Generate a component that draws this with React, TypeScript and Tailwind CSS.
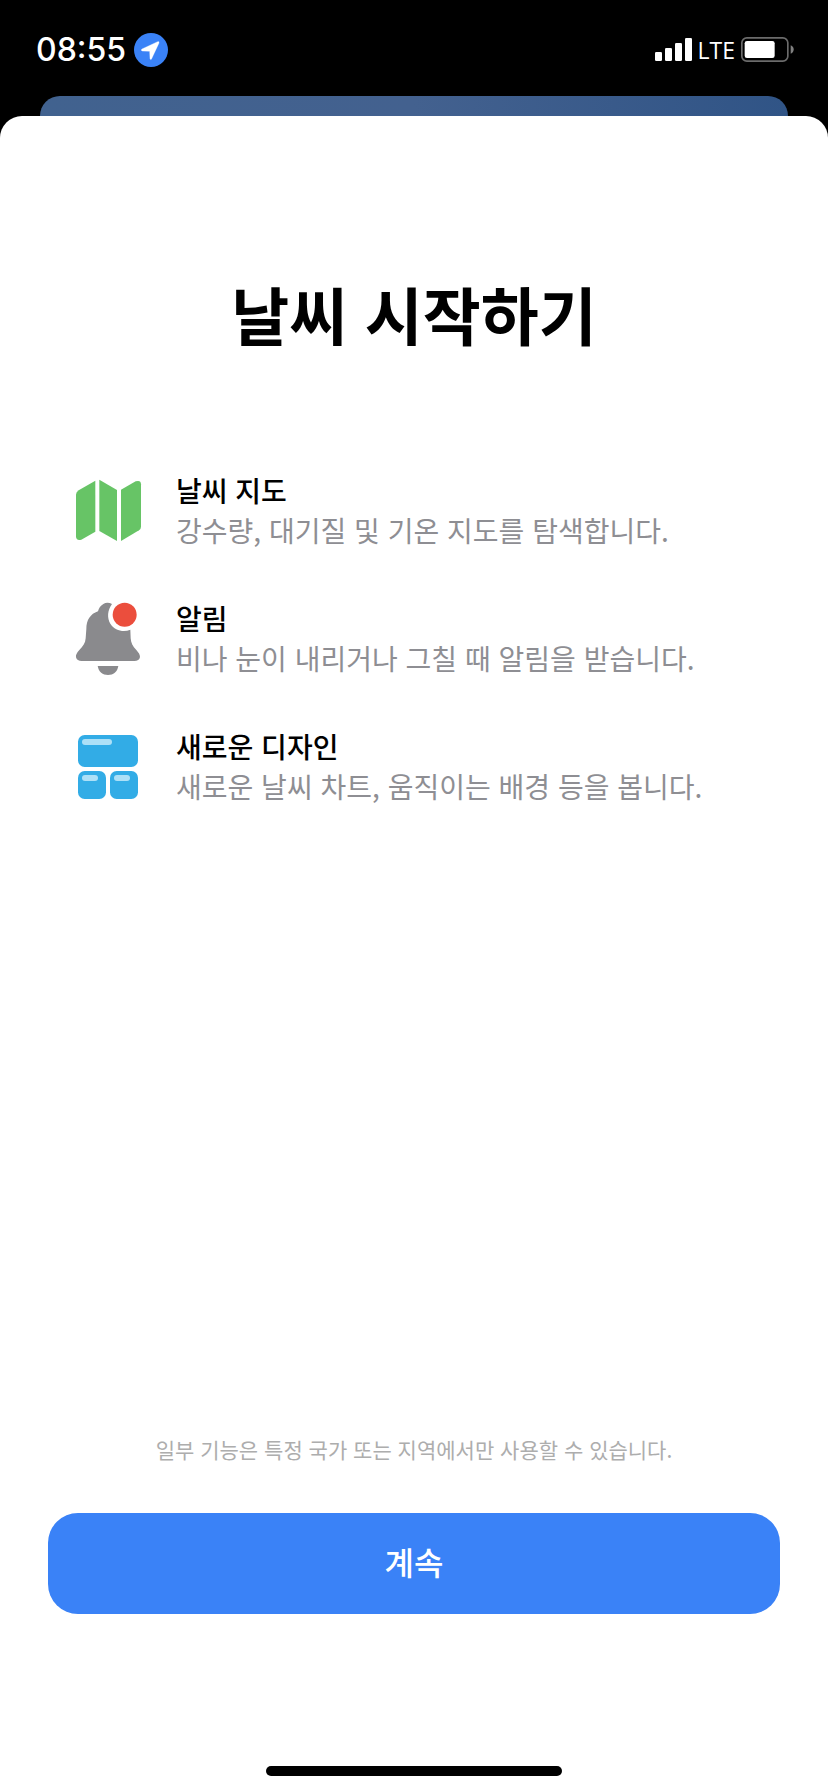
import type { ReactNode } from "react";

function LocationBadge() {
  return (
    <svg className="h-[34px] w-[34px]" viewBox="0 0 102 102" role="img" aria-label="위치 서비스">
      <circle cx="51" cy="51" r="51" fill="#3a82f7" />
      <path
        d="M71 26 L24 48 Q19 51 24 54 L47 55 L48 77 Q50 82 53 77L75 30 Q76 24 71 26 Z"
        fill="#fff"
        stroke="#fff"
        strokeWidth="1"
        strokeLinejoin="round"
      />
    </svg>
  );
}

function SignalBars() {
  return (
    <svg className="h-[23px] w-[37px]" viewBox="0 0 111 69" fill="#fff" aria-hidden="true">
      <rect x="0" y="42" width="21" height="27" rx="4" />
      <rect x="30" y="30" width="21" height="39" rx="4" />
      <rect x="60" y="15" width="21" height="54" rx="4" />
      <rect x="90" y="0" width="21" height="69" rx="4" />
    </svg>
  );
}

function Battery() {
  return (
    <svg className="h-[25px] w-[53px]" viewBox="0 0 159 75" aria-hidden="true">
      <rect x="2.5" y="2.5" width="138" height="70" rx="15" fill="none" stroke="#6b6b6b" strokeWidth="5" />
      <rect x="11" y="12" width="90" height="51" rx="7" fill="#fff" />
      <path d="M149 25 Q158 29 158 37.500 Q158 46 149 50 Z" fill="#808080" />
    </svg>
  );
}

function MapIcon() {
  return (
    <svg className="h-20 w-[72px]" viewBox="36 33 216 240" fill="#67c466" aria-hidden="true">
      <path d="M106 62 V215 L64 239 Q48 243 48 229 V104 Q48 96 56 91 Z" />
      <path d="M118 59 L171 90 V243 L118 213 Z" />
      <path d="M183 89 L227 64 Q243 59 243 73 V200 Q243 207 237 211 L183 243 Z" />
    </svg>
  );
}

function BellIcon() {
  return (
    <svg className="h-20 w-[72px]" viewBox="36 42 216 240" aria-hidden="true">
      <path
        d="M156 57 C148 53 138 52 130 57 C121 62 117 69 114 79 C91 87 79 105 79 132 L77 160 C76 175 69 184 58 195 C50 204 47 210 48 217 C50 225 56 228 65 228 H223 C232 228 239 224 240 216 C240 209 236 203 229 195 C218 184 213 174 212 160 L211 134 C190 143 164 136 151 116 C141 99 142 76 156 57 Z"
        fill="#8a8a8d"
      />
      <path d="M113 243 H175 C172 261 160 270 144 270 C128 270 116 261 113 243 Z" fill="#8a8a8d" />
      <circle cx="194" cy="89" r="36" fill="#eb4e3d" />
    </svg>
  );
}

function TilesIcon() {
  return (
    <svg className="h-20 w-[72px]" viewBox="36 36 216 240" fill="#32ace6" aria-hidden="true">
      <rect x="54" y="60" width="180" height="96" rx="20" />
      <rect x="54" y="168" width="84" height="84" rx="20" />
      <rect x="150" y="168" width="84" height="84" rx="20" />
      <g fill="#ade0f7">
        <rect x="66" y="72" width="90" height="18" rx="9" />
        <rect x="66" y="180" width="48" height="18" rx="9" />
        <rect x="162" y="180" width="48" height="18" rx="9" />
      </g>
    </svg>
  );
}

type Feature = { title: string; text: string; icon: ReactNode };

const features: Feature[] = [
  { title: "날씨 지도", text: "강수량, 대기질 및 기온 지도를 탐색합니다.", icon: <MapIcon /> },
  { title: "알림", text: "비나 눈이 내리거나 그칠 때 알림을 받습니다.", icon: <BellIcon /> },
  { title: "새로운 디자인", text: "새로운 날씨 차트, 움직이는 배경 등을 봅니다.", icon: <TilesIcon /> },
];

export default function App() {
  return (
    <div
      lang="ko"
      className="flex min-h-screen flex-col bg-black font-['Noto_Sans_CJK_KR',sans-serif] text-black"
    >
      <header className="flex h-24 items-center justify-between pr-[34px] pl-9 pt-[3px] font-['Inter','Noto_Sans_CJK_KR',sans-serif] text-white">
        <div className="flex items-center gap-2">
          <time className="text-[32px] leading-10 font-medium">08:55</time>
          <LocationBadge />
        </div>
        <div className="flex items-center gap-[6px]">
          <SignalBars />
          <span className="font-['Open_Sans',sans-serif] text-[23px] leading-8 font-medium">LTE</span>
          <Battery />
        </div>
      </header>

      <div className="mx-10 h-5 rounded-t-[20px] bg-linear-to-r from-[#41628f] via-[#43618f] to-[#305486]" />

      <main className="flex flex-1 flex-col rounded-t-[22px] bg-white px-12">
        <h1 className="mt-[149px] text-center text-[63px] leading-[96px] font-bold">날씨 시작하기</h1>

        <ul className="mt-[109px] flex flex-col gap-[46px] pl-6">
          {features.map((feature) => (
            <li key={feature.title} className="flex items-center gap-8">
              <div className="shrink-0">{feature.icon}</div>
              <div className="pb-[2px]">
                <h2 className="text-[28px] leading-10 font-medium">{feature.title}</h2>
                <p className="text-[28px] leading-10 text-[#8e8e93]">{feature.text}</p>
              </div>
            </li>
          ))}
        </ul>

        <div className="mt-auto flex flex-col items-center pt-16">
          <p className="text-center text-[21px] leading-8 text-[#adadad]">
            일부 기능은 특정 국가 또는 지역에서만 사용할 수 있습니다.
          </p>
          <button
            type="button"
            className="mt-12 h-[101px] w-full rounded-[30px] bg-[#3a82f7] pb-[6px] text-[32px] leading-10 font-medium text-white"
          >
            계속
          </button>
          <div className="mt-[152px] mb-4 h-[10px] w-[296px] rounded-full bg-black" />
        </div>
      </main>
    </div>
  );
}
